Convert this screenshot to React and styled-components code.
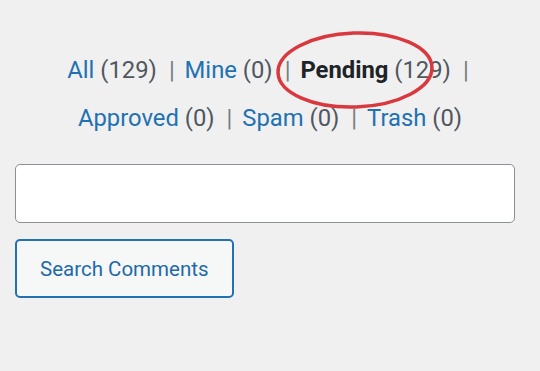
import React from 'react'
import styled, { createGlobalStyle } from 'styled-components'

const GlobalStyle = createGlobalStyle`
    body {
        margin: 0;
        background: #f0f0f1;
        font-family: Roboto, "Liberation Sans", sans-serif;
    }
`

const Page = styled.div`
    position: relative;
    padding: 46px 25px 0 15px;
`
const Filters = styled.ul`
    list-style: none;
    margin: 0 -25px 0 -15px;
    padding: 0 40px;
    text-align: center;
    font-size: 23.8px;
    line-height: 48px;
    color: #50575e;
`
const Filter = styled.li`
    display: inline;
`
const Item = styled.span`
    white-space: nowrap;
`
const FilterLink = styled.a`
    color: ${p => (p.$current ? '#1d2327' : '#2271b1')};
    font-weight: ${p => (p.$current ? 700 : 400)};
    text-decoration: none;
`
const Count = styled.span`
    color: #50575e;
    font-weight: 400;
`
const Sep = styled.span`
    display: inline-block;
    margin: 0 4px 0 12px;
    color: #787c82;
`
const Marker = styled.svg`
    position: absolute;
    left: 275px;
    top: 30px;
    width: 162px;
    height: 80px;
    pointer-events: none;
`
const SearchBox = styled.form`
    display: flex;
    flex-direction: column;
    align-items: flex-start;
    gap: 16px;
    margin-top: 22px;
`
const SearchInput = styled.input`
    box-sizing: border-box;
    width: 100%;
    height: 59px;
    border: 1.5px solid #8c8f94;
    border-radius: 5px;
    background: #fff;
    font: inherit;
`
const Button = styled.button`
    box-sizing: border-box;
    height: 59px;
    padding: 0 23px;
    border: 2px solid #2271b1;
    border-radius: 5px;
    background: #f6f7f7;
    color: #1f6aa8;
    font-family: Roboto, "Liberation Sans", sans-serif;
    font-size: 20.5px;
`

const filters = [
    { label: 'All', count: 129 },
    { label: 'Mine', count: 0 },
    { label: 'Pending', count: 129, current: true },
    { label: 'Approved', count: 0 },
    { label: 'Spam', count: 0 },
    { label: 'Trash', count: 0 },
]

const App = () => (
    <Page>
        <GlobalStyle />
        <Filters>
            {filters.map((f, i) => (
                <React.Fragment key={f.label}>
                    <Filter>
                        <Item>
                            <FilterLink href="#" $current={f.current}>
                                {f.label} <Count>({f.count})</Count>
                            </FilterLink>
                            {i < filters.length - 1 && <Sep>|</Sep>}
                        </Item>
                    </Filter>{' '}
                </React.Fragment>
            ))}
        </Filters>
        <Marker viewBox="0 0 162 80">
            <ellipse
                cx="80"
                cy="40"
                rx="77"
                ry="37"
                transform="rotate(-2 80 40)"
                fill="none"
                stroke="#d9383e"
                strokeWidth="3.5"
            />
        </Marker>
        <SearchBox onSubmit={e => e.preventDefault()}>
            <SearchInput type="search" />
            <Button type="submit">Search Comments</Button>
        </SearchBox>
    </Page>
)

export default App
